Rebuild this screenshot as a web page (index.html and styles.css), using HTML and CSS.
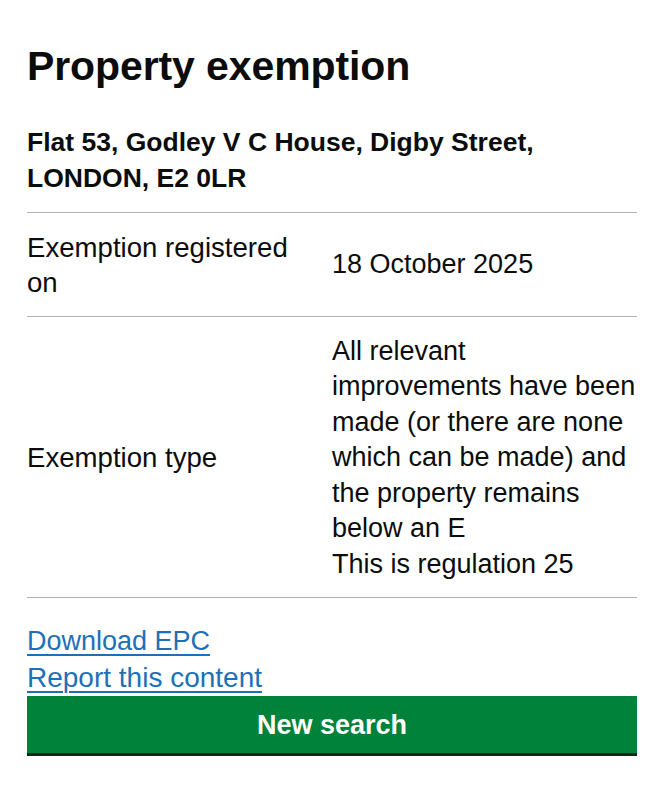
FILE: index.html
```html
<!DOCTYPE html>
<html lang="en">
<head>
<meta charset="utf-8">
<title>Property exemption</title>
<link rel="stylesheet" href="styles.css">
</head>
<body>
<main class="page">
  <h1 class="title">Property exemption</h1>
  <h2 class="address">Flat 53, Godley V C House, Digby Street, LONDON, E2 0LR</h2>
  <dl class="summary">
    <div class="row">
      <dt class="key">Exemption registered on</dt>
      <dd class="value">18 October 2025</dd>
    </div>
    <div class="row">
      <dt class="key">Exemption type</dt>
      <dd class="value">All relevant improvements have been made (or there are none which can be made) and the property remains below an E<br>This is regulation 25</dd>
    </div>
  </dl>
  <div class="links">
    <a class="link" href="#">Download EPC</a>
    <a class="link" href="#">Report this content</a>
  </div>
  <a class="button" href="#">New search</a>
</main>
</body>
</html>
```
FILE: styles.css
```css
* { box-sizing: border-box; }
html, body { margin: 0; padding: 0; background: #ffffff; }
body {
  font-family: "Liberation Sans", Arial, sans-serif;
  color: #0b0c0c;
  font-size: 27px;
  line-height: 35.5px;
}
.page {
  padding: 44px 27px 0 27px;
  display: flex;
  flex-direction: column;
}
.title {
  margin: 0;
  font-size: 41px;
  line-height: 45px;
  font-weight: 700;
  letter-spacing: -0.1px;
}
.address {
  margin: 35px 0 15.5px 0;
  font-size: 26.5px;
  line-height: 36px;
  font-weight: 700;
}
.summary {
  margin: 0;
  border-top: 1.5px solid #b1b4b6;
}
.row {
  display: grid;
  grid-template-columns: 1fr 1fr;
  align-items: center;
  border-bottom: 1.5px solid #b1b4b6;
  padding: 17px 0 15px 0;
}
.key {
  padding-right: 20px;
  font-size: 27.6px;
}
.value {
  margin: 0;
}
.links {
  display: flex;
  flex-direction: column;
  align-items: flex-start;
  margin-top: 26px;
  margin-bottom: 1px;
}
.link {
  color: #1d70b8;
  text-decoration: underline;
  text-decoration-thickness: 1.5px;
  text-underline-offset: 4px;
}
.link + .link {
  font-size: 28px;
}
.button {
  display: flex;
  align-items: center;
  justify-content: center;
  height: 60px;
  padding: 0;
  background: #00823b;
  box-shadow: inset 0 -3px 0 #002d18;
  color: #ffffff;
  font-weight: 700;
  text-decoration: none;
}
```
